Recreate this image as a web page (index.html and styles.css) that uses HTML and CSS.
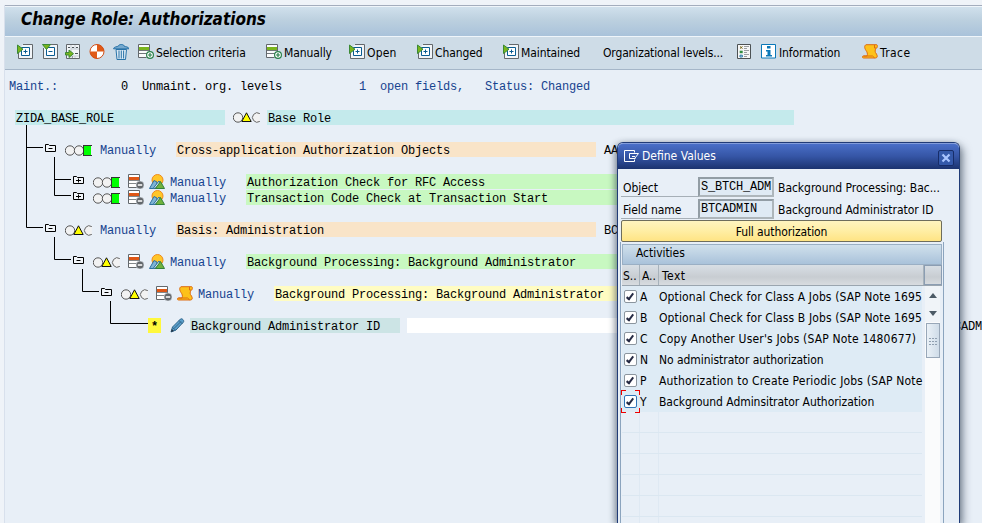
FILE: index.html
```html
<!DOCTYPE html>
<html lang="en">
<head>
<meta charset="utf-8">
<title>Change Role: Authorizations</title>
<link rel="stylesheet" href="styles.css">
</head>
<body>
<svg class="defs" width="0" height="0" aria-hidden="true">
  <defs>
    <symbol id="i-expand" viewBox="0 0 16 16">
      <path d="M1.500 6V14.500H15.500V.5H6" fill="#f2f5f8" stroke="#63686c"/>
      <path d="M4.500 3.500h8v8h-8z" fill="#fff" stroke="#0a5c92"/>
      <path d="M8.500 5.500v4M6.500 7.500h4" stroke="#0a5c92"/>
      <path d="M.5 1v8.500L6 5.200z" fill="#7ab51d" stroke="#3b8a35"/>
    </symbol>
    <symbol id="i-collapse" viewBox="0 0 16 16">
      <path d="M1.500 4V14.500H15.500V.5H8" fill="#f2f5f8" stroke="#63686c"/>
      <path d="M4.500 3.500h8v8h-8z" fill="#fff" stroke="#0a5c92"/>
      <path d="M6.500 7.500h4" stroke="#0a5c92"/>
      <path d="M.5 .5h8L4.500 5.500z" fill="#7ab51d" stroke="#3b8a35"/>
    </symbol>
    <symbol id="i-insert" viewBox="0 0 16 16">
      <path d="M1.500 .5h13v14h-13z" fill="#f2f5f8" stroke="#63686c"/>
      <path d="M6 1v13M10 1v4M10 12v2M6 5h8M6 12h8" stroke="#c5cdd4"/>
      <path d="M3 3.500h2M7 3.500h2M11 3.500h2M10 9.500h3M7 13h1" stroke="#4b5358"/>
      <path d="M.5 8.500h3.500V6l4.500 3.700L4 13.500V11H.5z" fill="#7ab51d" stroke="#3b8a35"/>
    </symbol>
    <symbol id="i-generate" viewBox="0 0 16 16">
      <circle cx="8" cy="7.500" r="7" fill="#fff"/>
      <path d="M8 7.500V.5A7 7 0 0 1 15 7.500zM8 7.500v7A7 7 0 0 1 1 7.500z" fill="#e05a17"/>
      <circle cx="8" cy="7.500" r="7" fill="none" stroke="#d04c14"/>
    </symbol>
    <symbol id="i-trash" viewBox="0 0 16 16">
      <path d="M3 5.500h10.500l-1 10h-8.500z" fill="#dceaf4" stroke="#2873a8"/>
      <path d="M6 6.500v8M8.300 6.500v8M10.600 6.500v8" stroke="#2873a8"/>
      <path d="M.5 4.800C1 2.500 4 3 5.500 2c0-2 5.500-2 5.500 0 1.500 1 4.500.5 5 2.800z" fill="#76a9ce" stroke="#2873a8"/>
    </symbol>
    <symbol id="i-add" viewBox="0 0 16 16">
      <path d="M11.500 8V.5H.5v13h8" fill="#fafbfc" stroke="#63686c"/>
      <path d="M1 3h10v3H1z" fill="#7ab51d"/>
      <path d="M1 6.500h10M1 9.500h8" stroke="#70767a"/>
      <circle cx="12" cy="11" r="3.400" fill="#fff" stroke="#28804a" stroke-width="1.200"/>
      <path d="M12 9v4M10 11h4" stroke="#28804a" stroke-width="1.200"/>
    </symbol>
    <symbol id="i-legend" viewBox="0 0 16 16">
      <path d="M1.500 .5h13v14h-13z" fill="#f6f6f6" stroke="#4d5254"/>
      <path d="M4 2.500l2.500 2M6.500 2.500l-2.500 2" stroke="#756313"/>
      <path d="M3.700 6.700h3v2.500h-3z" fill="#2f8d3e"/>
      <path d="M4 11.200h2.300v1.800H4z" fill="#fff" stroke="#1d70a2"/>
      <path d="M8 2.500h5M8 4.500h3M8 6.500h5M8 8.500h3M8 10.500h5M8 12.500h3" stroke="#9a9ea0"/>
    </symbol>
    <symbol id="i-info" viewBox="0 0 16 16">
      <path d="M.5 .5h14v13.500H.5z" fill="#fff" stroke="#0a78b8"/>
      <path d="M6 2h3.500v2.500H6zM5 6h4.500v5H11v1.500H5V11h1.500V7.500H5z" fill="#0a78b8"/>
    </symbol>
    <symbol id="i-scroll" viewBox="0 0 16 16">
      <path d="M4 .7h10.700c1 0 1 3.500-.7 3.500-1 2.300-1.500 3.500.5 5.800 1.500 2.500.5 4-1 4H1.500C0 14 .2 12 1.300 12H5c1-2.300 0-4-1-5.500C2 3.500 2.500 1.500 4 .7z" fill="#fdc21a" stroke="#dd6c12"/>
      <path d="M12.500 1v3H14M1.500 12h9l2 1.800" fill="none" stroke="#dd6c12"/>
    </symbol>
    <symbol id="i-doc" viewBox="0 0 16 16">
      <path d="M.5 .5h11v13H.5z" fill="#fff" stroke="#63686c"/>
      <path d="M1 3h10v3H1z" fill="#de5616"/>
      <path d="M1 6.500h10M1 9.500h8" stroke="#83888b"/>
      <circle cx="12" cy="11" r="4" fill="#63686c" stroke="#e8eff7" stroke-width=".5"/>
      <path d="M9.800 11h4.400" stroke="#fff" stroke-width="1.500"/>
    </symbol>
    <symbol id="i-mount" viewBox="0 0 16 16">
      <circle cx="8.500" cy="6" r="5.500" fill="#ffc629" stroke="#ef8a1d"/>
      <path d="M.5 14.500L5 6.500l3 1.500-1 6.500z" fill="#7db4d5" stroke="#2d6f9e"/>
      <path d="M4 14.500L10 7l2 3" fill="#d4e6f0" stroke="#2d6f9e"/>
      <path d="M6.500 14.500L11.500 7.500l4 7z" fill="#6fb23c" stroke="#34803b"/>
    </symbol>
    <symbol id="i-pencil" viewBox="0 0 16 16">
      <path d="M1 14l1.500-5L10.500 1c1.500-1 4 1.500 3 3L6 12z" fill="#5ba0cc" stroke="#30658a"/>
      <path d="M2.500 9.500L5.500 12M9 2.500L12.500 6M4 10.500l7-7" fill="none" stroke="#30658a"/>
      <path d="M1 14l.8-3 2.200 2z" fill="#234"/>
    </symbol>
    <symbol id="i-minus" viewBox="0 0 12 9">
      <path d="M.5 7.500V.5h3l1 1h6v6z" fill="#f1f5f9" stroke="#000"/>
      <path d="M3.500 4.500h4" stroke="#000"/>
    </symbol>
    <symbol id="i-plus" viewBox="0 0 12 9">
      <path d="M.5 7.500V.5h3l1 1h6v6z" fill="#f1f5f9" stroke="#000"/>
      <path d="M3 4.500h5M5.500 2.500v4" stroke="#000"/>
    </symbol>
    <symbol id="i-green" viewBox="0 0 27 11">
      <circle cx="5" cy="5.500" r="4.700" fill="#f2f2f2" stroke="#555"/>
      <circle cx="14" cy="5.500" r="4.700" fill="#f2f2f2" stroke="#555"/>
      <path d="M19 1h7v9h-7z" fill="#0f0"/>
      <path d="M18.500 0v11M18 .5h9M18 10.500h9" stroke="#333"/>
    </symbol>
    <symbol id="i-yellow" viewBox="0 0 27 11">
      <circle cx="5" cy="5.500" r="4.700" fill="#f2f2f2" stroke="#555"/>
      <path d="M26.800 1.600A4.700 4.700 0 1 0 26.800 9.400" fill="#f2f2f2" stroke="#666"/>
      <path d="M13.500 .8L18.200 9.500H8.800z" fill="#ff0" stroke="#111"/>
    </symbol>
  </defs>
</svg>

<main class="window">
  <h1 class="title"><span>Change Role: Authorizations</span></h1>
  <nav class="toolbar">
    <span class="tool t1"><svg><use href="#i-expand"/></svg></span>
    <span class="tool t2"><svg><use href="#i-collapse"/></svg></span>
    <span class="tool t3"><svg><use href="#i-insert"/></svg></span>
    <span class="tool t4"><svg><use href="#i-generate"/></svg></span>
    <span class="tool t5"><svg><use href="#i-trash"/></svg></span>
    <span class="tool t6"><svg><use href="#i-add"/></svg>Selection criteria</span>
    <span class="tool t7"><svg><use href="#i-add"/></svg>Manually</span>
    <span class="tool t8"><svg><use href="#i-expand"/></svg>Open</span>
    <span class="tool t9"><svg><use href="#i-expand"/></svg>Changed</span>
    <span class="tool t10"><svg><use href="#i-expand"/></svg>Maintained</span>
    <span class="tool t11">Organizational levels...</span>
    <span class="tool t12"><svg><use href="#i-legend"/></svg></span>
    <span class="tool t13"><svg><use href="#i-info"/></svg>Information</span>
    <span class="tool t14"><svg><use href="#i-scroll"/></svg>Trace</span>
  </nav>
  <section class="content">
    <p class="status"><span class="blue">Maint.:         </span>0  Unmaint. org. levels           <span class="blue">1  open fields,   Status: Changed</span></p>
    <div class="tree">
      <svg class="lines" width="160" height="224"><path d="M21.500 15V117.500H38M21.500 37.500H38M49.500 47V85.500H66M49.500 69.500H66M49.500 127V149.500H66M77.500 159V181.500H94M105.500 191V213.500H143" fill="none" stroke="#000"/></svg>
      <div class="rows">
        <div class="row root"><span class="bar cyan w30">ZIDA_BASE_ROLE</span><svg class="light"><use href="#i-yellow"/></svg><span class="bar cyan w75">Base Role</span></div>
        <div class="row l1 spaced"><svg class="folder"><use href="#i-minus"/></svg><svg class="light"><use href="#i-green"/></svg><span class="man">Manually</span><span class="bar peach w60">Cross-application Authorization Objects</span><span class="code">AA</span></div>
        <div class="row l2 spaced"><svg class="folder"><use href="#i-plus"/></svg><svg class="light"><use href="#i-green"/></svg><svg class="ic"><use href="#i-doc"/></svg><svg class="ic second"><use href="#i-mount"/></svg><span class="man near">Manually</span><span class="bar green w60">Authorization Check for RFC Access</span></div>
        <div class="row l2"><svg class="folder"><use href="#i-plus"/></svg><svg class="light"><use href="#i-green"/></svg><svg class="ic"><use href="#i-doc"/></svg><svg class="ic second"><use href="#i-mount"/></svg><span class="man near">Manually</span><span class="bar green w60">Transaction Code Check at Transaction Start</span></div>
        <div class="row l1 spaced"><svg class="folder"><use href="#i-minus"/></svg><svg class="light"><use href="#i-yellow"/></svg><span class="man">Manually</span><span class="bar peach w60">Basis: Administration</span><span class="code">BC</span></div>
        <div class="row l2 spaced"><svg class="folder"><use href="#i-minus"/></svg><svg class="light"><use href="#i-yellow"/></svg><svg class="ic"><use href="#i-doc"/></svg><svg class="ic second"><use href="#i-mount"/></svg><span class="man near">Manually</span><span class="bar green w60">Background Processing: Background Administrator</span></div>
        <div class="row l3 spaced"><svg class="folder"><use href="#i-minus"/></svg><svg class="light"><use href="#i-yellow"/></svg><svg class="ic"><use href="#i-doc"/></svg><svg class="ic second"><use href="#i-scroll"/></svg><span class="man near">Manually</span><span class="bar yellow w60">Background Processing: Background Administrator</span></div>
        <div class="row leaf spaced"><span class="star">*</span><svg class="ic pencil"><use href="#i-pencil"/></svg><span class="bar teal w30">Background Administrator ID</span><span class="bar white"></span><span class="field-code">CADM</span></div>
      </div>
    </div>
  </section>
</main>

<aside class="dialog">
  <header class="dlg-head">
    <svg width="16" height="12"><path d="M10.500 2.500V.5H.5v11H10.500V9.500M11.500 8.500H5.500v-5H14.500L11 8M8 6.500h3" fill="none" stroke="#fff"/></svg>
    <span>Define Values</span>
    <button class="close"><svg width="10" height="10"><path d="M1.500 1.500l7 7M8.500 1.500l-7 7" stroke="#a9c5ff" stroke-width="2.200"/></svg></button>
  </header>
  <div class="dlg-body">
    <div class="field"><label>Object</label><span class="input">S_BTCH_ADM</span><span class="desc">Background Processing: Bac...</span></div>
    <div class="field"><label>Field name</label><span class="input">BTCADMIN</span><span class="desc">Background Administrator ID</span></div>
    <button class="full">Full authorization</button>
    <section class="panel">
      <h2>Activities</h2>
      <div class="thead"><span class="c1">S..</span><span class="c2">A..</span><span class="c3">Text</span><span class="corner"></span></div>
      <div class="tbody">
        <div class="list">
          <div class="item"><span class="chk"></span><b>A</b><span class="txt wide">Optional Check for Class A Jobs (SAP Note 1695</span></div>
          <div class="item"><span class="chk"></span><b>B</b><span class="txt wide">Optional Check for Class B Jobs (SAP Note 1695</span></div>
          <div class="item"><span class="chk"></span><b>C</b><span class="txt wider">Copy Another User's Jobs (SAP Note 1480677)</span></div>
          <div class="item"><span class="chk"></span><b>N</b><span class="txt">No administrator authorization</span></div>
          <div class="item"><span class="chk"></span><b>P</b><span class="txt wider">Authorization to Create Periodic Jobs (SAP Note</span></div>
          <div class="item"><span class="chk focus"></span><b>Y</b><span class="txt">Background Adminsitrator Authorization</span></div>
          <div class="item empty"></div><div class="item empty"></div><div class="item empty"></div><div class="item empty"></div><div class="item empty"></div><div class="item empty"></div>
        </div>
        <div class="scroll"><span class="arrow up"></span><span class="arrow down"></span><span class="thumb"></span></div>
      </div>
    </section>
  </div>
</aside>
</body>
</html>
```
FILE: styles.css
```css
* { box-sizing: border-box; }
html, body { height: 100%; }
body {
  margin: 0;
  padding: 5px 0 0 5px;
  overflow: hidden;
  background: #eff3f8;
  color: #000;
  font: 12px/16px "DejaVu Sans Condensed", "DejaVu Sans", sans-serif;
  letter-spacing: -.05px;
}
svg { display: block; flex: none; }
.defs { position: absolute; }
.window {
  height: 518px;
  overflow: hidden;
  border-top: 1px solid #a4adbd;
  box-shadow: -1px 0 #d8e0ec;
  background: #e8eff7;
}
.title {
  height: 31px;
  margin: 0;
  padding-left: 16px;
  border: solid #eff5fa;
  border-width: 1px 0;
  background: linear-gradient(#d0e0ec, #bcd0df 45%, #a9c2da);
  font-size: 17px;
  line-height: 25px;
  font-style: italic;
  letter-spacing: 0;
  white-space: nowrap;
}
.toolbar {
  display: flex;
  height: 33px;
  padding: 7px 0 0 12px;
  border-bottom: 1px solid #a5b6c8;
  background: #cedce7;
  letter-spacing: -.1px;
}
.tool { display: flex; gap: 2px; flex: none; height: 17px; line-height: 19px; white-space: nowrap; }
.tool svg { width: 16px; height: 16px; }
.t1 { width: 25px; } .t2 { width: 23px; } .t3, .t4 { width: 24px; } .t5 { width: 25px; }
.t6 { width: 128px; } .t7 { width: 83px; } .t8 { width: 68px; } .t9 { width: 86px; }
.t10 { width: 100px; } .t11 { width: 133px; letter-spacing: -.15px; } .t12 { width: 25px; }
.t13 { width: 101px; }
.t14 { letter-spacing: .4px; }
.t8 { letter-spacing: .2px; }
.content {
  padding-top: 8px;
  font-family: "Liberation Mono", monospace;
  line-height: 18px;
  letter-spacing: -.2px;
}
.status { height: 32px; margin: 0; padding-left: 4px; white-space: pre; }
.blue, .man { color: #17438f; }
.tree { display: grid; }
.lines, .rows { grid-area: 1 / 1; }
.row { display: flex; height: 16px; white-space: pre; }
.spaced { margin-top: 16px; }
.root { padding-left: 10px; }
.l1 { padding-left: 40px; } .l2 { padding-left: 68px; } .l3 { padding-left: 96px; } .leaf { padding-left: 143px; }
.folder { width: 12px; height: 9px; margin-top: 2px; }
.light { width: 27px; height: 11px; margin: 3px 8px 0; }
.ic { width: 16px; height: 16px; }
.second { margin-left: 5px; }
.man { flex: none; width: 76px; }
.near { margin-left: 5px; }
.bar { flex: none; height: 15px; padding-left: 1px; }
.w30 { width: 210px; } .w60 { width: 420px; } .w75 { width: 527px; }
.cyan { background: #c4eaec; } .peach { background: #f9e4c8; } .green { background: #c8f8c1; }
.yellow { background: #fffcc2; } .teal { background: #cce4e5; }
.white { width: 525px; margin-left: 7px; background: #fff; }
.root .light { margin: 2px 7px 0 8px; }
.code { margin-left: 8px; }
.star { width: 13px; height: 15px; background: #fff83d; text-align: center; font-weight: bold; }
.pencil { margin: 0 4px 0 9px; }
.field-code { margin-left: 22px; }

.dialog {
  position: absolute;
  left: 617px;
  top: 142px;
  bottom: 0;
  width: 343px;
  border: solid #213c77;
  border-width: 1px 1px 0;
  border-radius: 6px 6px 0 0;
  background: #e8eff7;
  box-shadow: 3px 4px 8px rgba(30, 45, 65, .5), -2px 2px 7px rgba(30, 45, 65, .45);
  white-space: nowrap;
}
.dlg-head {
  display: flex;
  align-items: center;
  height: 26px;
  padding: 0 5px 0 6px;
  border-top: 1px solid #829cda;
  border-radius: 5px 5px 0 0;
  background: linear-gradient(#4a6fc8, #3555a5 50%, #1b336f);
  color: #fff;
}
.dlg-head > svg { margin-top: -2px; }
.dlg-head span { flex: 1; margin: -2px 0 0 2px; letter-spacing: 0; }
.close {
  display: grid;
  place-items: center;
  width: 16px;
  height: 16px;
  margin-top: 2px;
  padding: 0;
  border: 1px solid #172d69;
  border-radius: 2px;
  background: #3459aa;
}
.dlg-body { padding: 8px 16px 0 3px; }
.field { display: flex; height: 22px; }
.field label { width: 77px; height: 20px; padding-left: 2px; border-bottom: 1px solid #a6afb7; line-height: 22px; }
.input {
  width: 76px;
  height: 20px;
  padding-left: 1px;
  border: 2px solid #929da5;
  border-right-color: #aeb6bb;
  border-bottom-color: #aeb6bb;
  background: #dfeaf4;
  font-family: "Liberation Mono", monospace;
  line-height: 17px;
  letter-spacing: -.2px;
}
.desc { margin-left: 4px; line-height: 22px; letter-spacing: -.03px; }
.full {
  display: block;
  width: 321px;
  height: 22px;
  margin: -1px 0 0;
  padding: 1px 0 0;
  border: 1px solid #6e6d5c;
  border-radius: 2px;
  background: linear-gradient(#fff4bf, #ffeea4 50%, #ffe484);
  color: #000;
  font: inherit;
  letter-spacing: -.1px;
}
.panel { width: 324px; height: 281px; margin-left: -1px; padding: 2px 1px 0; overflow: hidden; border: solid #8ba4be; border-width: 0 1px; }
.panel h2 {
  height: 21px;
  margin: 0;
  padding-left: 13px;
  border: 1px solid #9aafc4;
  background: linear-gradient(#d0e0ec, #a9c2da);
  font: inherit;
  line-height: 17px;
}
.thead { display: flex; height: 21px; border-bottom: 1px solid #9aa5af; background: linear-gradient(#d8dfe5, #c8cdd2 60%, #d8dce0); line-height: 22px; }
.thead span { border-right: 1px solid #a7b2bb; padding-left: 2px; }
.thead .c1 { width: 18px; padding-left: 1px; } .thead .c2 { width: 19px; } .thead .c3 { flex: 1; padding-left: 3px; letter-spacing: .5px; }
.thead .corner { width: 18px; border: 1px solid #8b9db2; }
.tbody { display: flex; }
.list { width: 300px; }
.item { display: flex; align-items: center; height: 21px; padding-left: 2px; background: #deebf5; }
.item b { width: 19px; margin-left: 3px; font-weight: normal; }
.txt { flex: 1; min-width: 0; }
.wide { letter-spacing: .12px; }
.wider { letter-spacing: .18px; }
.empty { border-bottom: 1px solid #dbe7f1; background: linear-gradient(90deg, transparent 17px, #dfe9f3 17px, #dfe9f3 18px, transparent 18px, transparent 36px, #dfe9f3 36px, #dfe9f3 37px, transparent 37px); }
.chk { position: relative; flex: none; width: 13px; height: 13px; border: 1px solid #8b959e; border-radius: 2px; background: #fff; }
.chk::after { content: ""; position: absolute; box-sizing: content-box; left: 3px; top: 1px; width: 2px; height: 6px; border: solid #252a44; border-width: 0 2px 2px 0; transform: rotate(38deg); }
.focus { border-color: #2f73b8; }
.focus::before {
  content: "";
  position: absolute;
  inset: -6px -4px;
  background:
    linear-gradient(#e00, #e00) 0 0 / 5px 1px, linear-gradient(#e00, #e00) 0 0 / 1px 5px,
    linear-gradient(#e00, #e00) 100% 0 / 5px 1px, linear-gradient(#e00, #e00) 100% 0 / 1px 5px,
    linear-gradient(#e00, #e00) 0 100% / 5px 1px, linear-gradient(#e00, #e00) 0 100% / 1px 5px,
    linear-gradient(#e00, #e00) 100% 100% / 5px 1px, linear-gradient(#e00, #e00) 100% 100% / 1px 5px;
  background-repeat: no-repeat;
}
.scroll { width: 15px; margin-left: 3px; background: #fafbfc; }
.arrow { display: grid; place-items: center; height: 18px; background: #f0f4f8; }
.arrow::after { content: ""; border: solid transparent; border-width: 0 4px; }
.up::after { border-bottom: 5px solid #4d5b66; }
.down::after { border-top: 5px solid #4d5b66; }
.thumb {
  display: block;
  height: 35px;
  margin: 1px 0 0 1px;
  border: 1px solid #98a7b8;
  background: linear-gradient(90deg, #eaf1f7, #cfdce8);
}
.thumb::after { content: ""; display: block; width: 8px; height: 8px; margin: 14px 0 0 2px; background: repeating-linear-gradient(#8f9fb0 0 1px, transparent 1px 3px); mask: repeating-linear-gradient(90deg, #000 0 2px, transparent 2px 3px); }
```
